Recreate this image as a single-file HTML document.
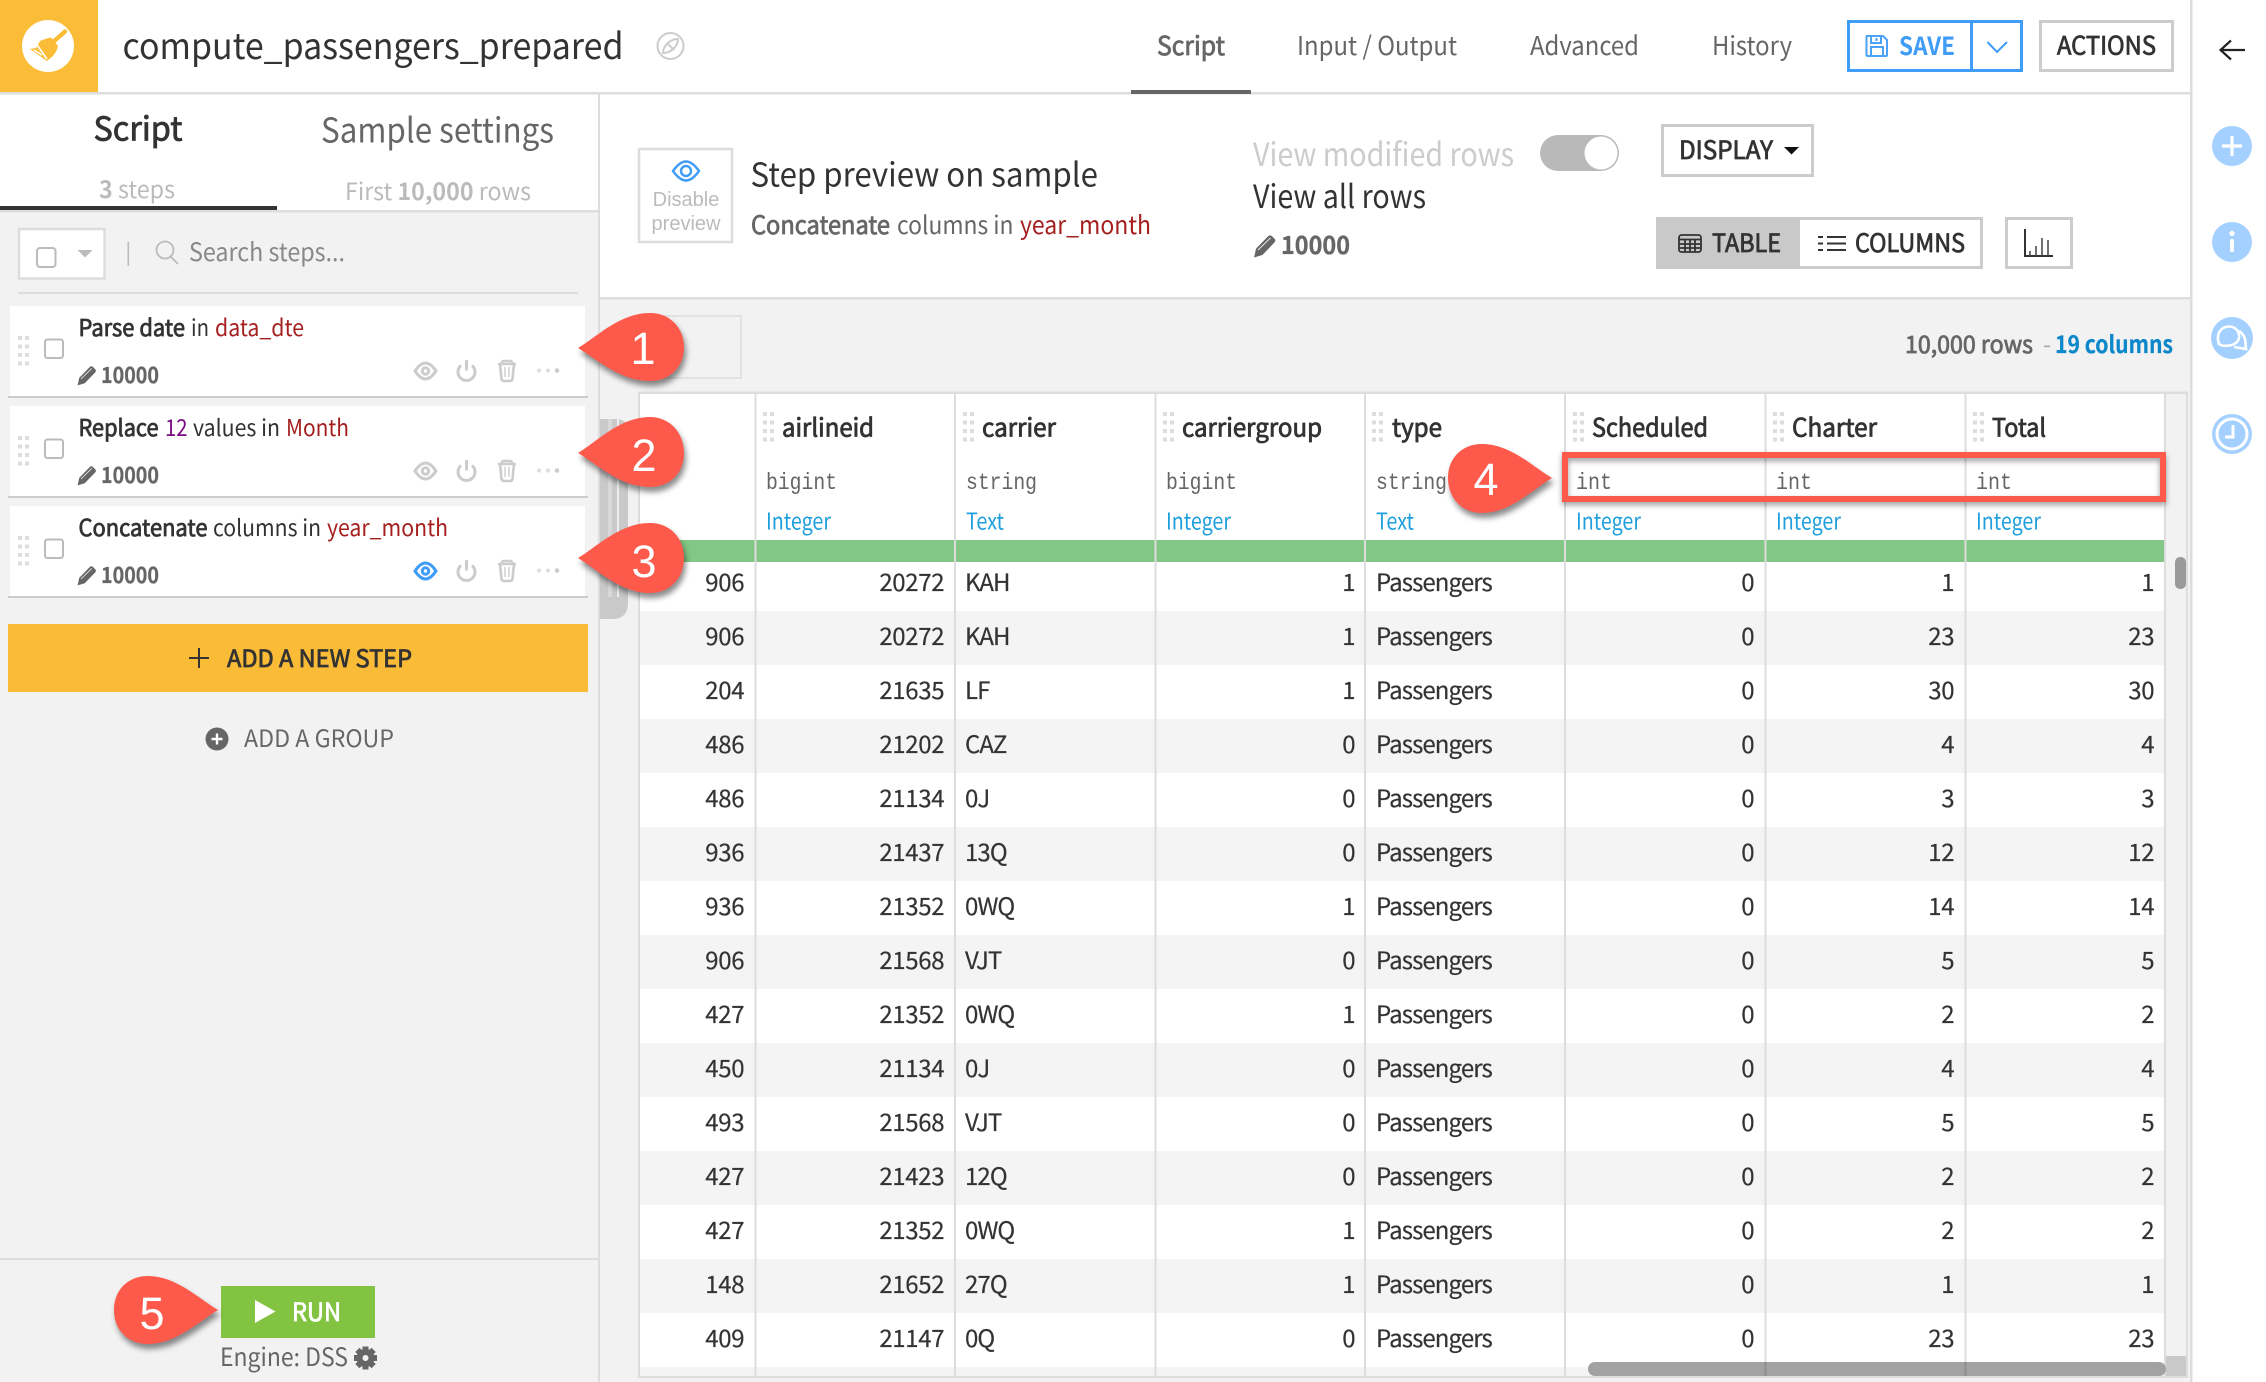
<!DOCTYPE html>
<html lang="en"><head><meta charset="utf-8"><title>compute_passengers_prepared</title>
<style>
html,body{margin:0;padding:0;background:#fff;width:2266px;height:1382px;overflow:hidden}
svg{display:block}
text{font-family:"Noto Sans CJK JP","Liberation Sans",sans-serif;fill:#333;white-space:pre}
.b{font-weight:700}
.m{stroke:#333;stroke-width:.8px}
.g{fill:#666;stroke:#666}
.lib{font-family:"Liberation Sans",sans-serif}
.mono{font-family:"Liberation Mono",monospace;font-size:23px;fill:#666}
.c text{font-size:24px;letter-spacing:-.9px;stroke:#333;stroke-width:.2px}
.c text.e{text-anchor:end;letter-spacing:-.35px;transform:translateX(1.2px)}
.blu{font-size:23px;fill:#1f9fdd}
.n{font-size:25px;stroke:#333;stroke-width:.8px}
.st{font-size:23px}
.red{fill:#a51f1f}
.num{font-family:"Liberation Sans",sans-serif;font-size:45px;fill:#fff;text-anchor:middle}
.cnt{font-size:22px;font-weight:700;fill:#666;stroke:#666;stroke-width:.3px}
.call{fill:#fe5a4c;filter:drop-shadow(2px 5px 3px rgba(0,0,0,.45))}
</style></head><body>
<svg xmlns="http://www.w3.org/2000/svg" width="2266" height="1382" viewBox="0 0 2266 1382">
<defs>
<symbol id="pen" viewBox="0 0 18 19" overflow="visible"><path d="M0 19 1.500 12 12 1.200Q13.400 0 14.800 1.200L17 3.400Q18.200 4.800 17 6.200L6.600 17Z" fill="#666" stroke="#666" stroke-width=".6"/><path d="M3 13 13.800 2.400" stroke="#fff" stroke-width=".7" fill="none"/></symbol>
<symbol id="grip" viewBox="0 0 11 30" overflow="visible"><g fill="#ddd"><rect x="0" y="0" width="4" height="4"/><rect x="7" y="0" width="4" height="4"/><rect x="0" y="8.500" width="4" height="4"/><rect x="7" y="8.500" width="4" height="4"/><rect x="0" y="17" width="4" height="4"/><rect x="7" y="17" width="4" height="4"/><rect x="0" y="25.500" width="4" height="4"/><rect x="7" y="25.500" width="4" height="4"/></g></symbol>
<symbol id="acts" viewBox="0 0 146 24" overflow="visible">
<g fill="none" stroke="#ccc" stroke-width="3">
<path d="M59 6.500A8.500 8.500 0 1 0 70 6.500"/><path d="M64.500 1V11.500"/>
<path d="M96 5H114M100 5V3.500Q100 2 102 2H108Q110 2 110 3.500V5M98 5 99.500 20Q100 22 102 22H108Q110 22 110.500 20L112 5" stroke-width="2.600"/><path d="M103 8V18M107 8V18" stroke-width="1.400"/></g>
<circle cx="137" cy="11.500" r="2" fill="#ddd"/><circle cx="146" cy="11.500" r="2" fill="#ddd"/><circle cx="155" cy="11.500" r="2.300" fill="#ccc"/></symbol>
</defs>

<!-- header -->
<rect x="0" y="0" width="98" height="92" fill="#fbbd38"/>
<circle cx="48" cy="46" r="26" fill="#fff"/>
<path d="M65 31.500 52 43" stroke="#fbbd38" stroke-width="4.500" stroke-linecap="round"/>
<path d="M40 41Q47 38 51 37.500L58 46Q57 51 53 56L47 61 30 49 36 48Z" fill="#fbbd38"/>
<path d="M37 45 47 59M42 55 34 50" stroke="#fff" stroke-width="1.600" fill="none"/>
<text x="122.500" y="59" font-size="36" textLength="501" lengthAdjust="spacingAndGlyphs">compute_passengers_prepared</text>
<g fill="none" stroke="#ccc" stroke-width="2"><circle cx="670.500" cy="46" r="13"/><path d="M663 53C663 46 670 39 678 39C678 46 671 53 663 53ZM667 43 674 50"/></g>
<rect x="0" y="92" width="2190" height="2.500" fill="#ddd"/>
<text x="1157" y="55" font-size="26" class="m g" textLength="68" lengthAdjust="spacingAndGlyphs">Script</text>
<rect x="1131" y="90" width="120" height="4" fill="#666"/>
<text x="1297" y="55" style="fill:#666" font-size="26" textLength="160" lengthAdjust="spacingAndGlyphs">Input / Output</text>
<text x="1530" y="55" style="fill:#666" font-size="26" textLength="109" lengthAdjust="spacingAndGlyphs">Advanced</text>
<text x="1712" y="55" style="fill:#666" font-size="26" textLength="80" lengthAdjust="spacingAndGlyphs">History</text>
<rect x="1848.500" y="21.500" width="173" height="49" fill="#fff" stroke="#3f9cf7" stroke-width="3"/>
<rect x="1970" y="21" width="3" height="50" fill="#3f9cf7"/>
<path d="M1867 36H1883L1887 40V55Q1887 56 1886 56H1868Q1866.500 56 1866.500 55V37Q1866.500 36 1867 36ZM1871 36V43H1881V36M1871 56V47H1883V56M1876.500 38V41" fill="none" stroke="#4ba2f7" stroke-width="2"/>
<text x="1899" y="55" font-size="25" class="b" style="fill:#3f9cf7" textLength="56" lengthAdjust="spacingAndGlyphs">SAVE</text>
<path d="M1987.500 42 1997 52 2007 42" fill="none" stroke="#3f9cf7" stroke-width="2"/>
<rect x="2040.500" y="21.500" width="132" height="49" fill="#fff" stroke="#ccc" stroke-width="3"/>
<text x="2057" y="54.500" font-size="25" class="m" textLength="99" lengthAdjust="spacingAndGlyphs">ACTIONS</text>

<!-- right rail -->
<rect x="2190" y="0" width="2.500" height="1382" fill="#ddd"/>
<path d="M2245 50H2221M2231 40.500 2220.500 50 2231 59.500" fill="none" stroke="#222" stroke-width="2.200"/>
<g fill="#a3d0ff"><circle cx="2232" cy="146" r="20"/><circle cx="2232" cy="242" r="20"/><circle cx="2232" cy="338" r="21"/><circle cx="2232" cy="434" r="20"/></g>
<path d="M2232 136V156M2222 146H2242" stroke="#fff" stroke-width="3.200" fill="none"/>
<circle cx="2232" cy="233.500" r="2.600" fill="#fff"/><rect x="2230" y="239" width="4" height="13" rx="1.500" fill="#fff"/>
<path d="M2219 344C2215 332 2223 326.500 2229 326.500C2238 326.500 2242 336 2237 342C2233 346 2226 346 2222 345.500ZM2239 331C2247 336 2245 344 2246 349L2234 347" fill="none" stroke="#fff" stroke-width="2.600"/>
<circle cx="2232" cy="434" r="15" fill="none" stroke="#fff" stroke-width="3"/><path d="M2233 425V437H2225" fill="none" stroke="#fff" stroke-width="3"/>

<!-- left panel -->
<rect x="0" y="212" width="598" height="1170" fill="#f2f2f2"/>
<rect x="0" y="210" width="598" height="2.500" fill="#ddd"/>
<rect x="0" y="206" width="277" height="4" fill="#333"/>
<text x="93.500" y="140.500" font-size="33" class="m" textLength="89" lengthAdjust="spacingAndGlyphs">Script</text>
<text x="321" y="142.500" font-size="34" style="fill:#666" textLength="233" lengthAdjust="spacingAndGlyphs">Sample settings</text>
<text x="99" y="198" font-size="24" style="fill:#bbb" textLength="76" lengthAdjust="spacingAndGlyphs"><tspan class="b">3</tspan> steps</text>
<text x="345" y="200" font-size="24" style="fill:#bbb" textLength="186" lengthAdjust="spacingAndGlyphs">First <tspan class="b">10,000</tspan> rows</text>
<rect x="19" y="229" width="85.500" height="49.500" fill="#fff" stroke="#ddd" stroke-width="2.500"/>
<rect x="37" y="248" width="18.500" height="19" rx="3" fill="#fff" stroke="#bbb" stroke-width="2"/>
<path d="M77.500 250H92.500L85 257.500Z" fill="#bbb"/>
<rect x="127.500" y="242" width="1.600" height="24" fill="#bbb"/>
<g fill="none" stroke="#bbb" stroke-width="1.800"><circle cx="165" cy="250" r="8.500"/><path d="M171 257 178 264"/></g>
<text x="189" y="261" font-size="25" style="fill:#888" textLength="156" lengthAdjust="spacingAndGlyphs">Search steps...</text>
<rect x="18" y="292" width="560" height="2" fill="#ddd"/>

<!-- steps -->
<g id="s1">
<rect x="10" y="306" width="575" height="90" fill="#fff"/><rect x="8" y="396" width="580" height="2" fill="#ccc"/>
<use href="#grip" x="18" y="336" width="11" height="30"/>
<rect x="45" y="339.500" width="18" height="18.500" rx="2.500" fill="#fff" stroke="#bbb" stroke-width="2"/>
<text x="78.500" y="336" class="st m" textLength="106.500" lengthAdjust="spacingAndGlyphs">Parse date</text>
<text x="191" y="336" class="st" textLength="18" lengthAdjust="spacingAndGlyphs">in</text>
<text x="215" y="336" class="st red" textLength="89" lengthAdjust="spacingAndGlyphs">data_dte</text>
<use href="#pen" x="78" y="366" width="18" height="19"/>
<text x="101" y="383" class="cnt" textLength="58" lengthAdjust="spacingAndGlyphs">10000</text>
<g fill="none" stroke="#ccc" stroke-width="3"><path d="M415 371C419 365 422 363 425.500 363C429 363 432 365 436 371C432 377 429 379 425.500 379C422 379 419 377 415 371Z"/><circle cx="425.500" cy="371" r="3.200"/></g>
<use href="#acts" x="402" y="359" width="146" height="24"/>
</g>
<g id="s2">
<rect x="10" y="406" width="575" height="90" fill="#fff"/><rect x="8" y="496" width="580" height="2" fill="#ccc"/>
<use href="#grip" x="18" y="436" width="11" height="30"/>
<rect x="45" y="439.500" width="18" height="18.500" rx="2.500" fill="#fff" stroke="#bbb" stroke-width="2"/>
<text x="78.500" y="436" class="st m" textLength="80" lengthAdjust="spacingAndGlyphs">Replace</text>
<text x="165" y="436" class="st" style="fill:#7a0a82" textLength="22.500" lengthAdjust="spacingAndGlyphs">12</text>
<text x="193" y="436" class="st" textLength="87" lengthAdjust="spacingAndGlyphs">values in</text>
<text x="286" y="436" class="st red" textLength="63" lengthAdjust="spacingAndGlyphs">Month</text>
<use href="#pen" x="78" y="466" width="18" height="19"/>
<text x="101" y="483" class="cnt" textLength="58" lengthAdjust="spacingAndGlyphs">10000</text>
<g fill="none" stroke="#ccc" stroke-width="3"><path d="M415 471C419 465 422 463 425.500 463C429 463 432 465 436 471C432 477 429 479 425.500 479C422 479 419 477 415 471Z"/><circle cx="425.500" cy="471" r="3.200"/></g>
<use href="#acts" x="402" y="459" width="146" height="24"/>
</g>
<g id="s3">
<rect x="10" y="506" width="575" height="90" fill="#fff"/><rect x="8" y="596" width="580" height="2" fill="#ccc"/>
<use href="#grip" x="18" y="536" width="11" height="30"/>
<rect x="45" y="539.500" width="18" height="18.500" rx="2.500" fill="#fff" stroke="#bbb" stroke-width="2"/>
<text x="78.500" y="536" class="st m" textLength="129" lengthAdjust="spacingAndGlyphs">Concatenate</text>
<text x="213" y="536" class="st" textLength="108" lengthAdjust="spacingAndGlyphs">columns in</text>
<text x="327" y="536" class="st red" textLength="121" lengthAdjust="spacingAndGlyphs">year_month</text>
<use href="#pen" x="78" y="566" width="18" height="19"/>
<text x="101" y="583" class="cnt" textLength="58" lengthAdjust="spacingAndGlyphs">10000</text>
<g fill="none" stroke="#3f9cf7" stroke-width="3"><path d="M415 571C419 565 422 563 425.500 563C429 563 432 565 436 571C432 577 429 579 425.500 579C422 579 419 577 415 571Z"/><circle cx="425.500" cy="571" r="3.200"/></g>
<use href="#acts" x="402" y="559" width="146" height="24"/>
</g>

<rect x="8" y="624" width="580" height="68" fill="#fabb37"/>
<path d="M199 648V668M189 658H209" stroke="#333" stroke-width="2"/>
<text x="227" y="667" font-size="24" class="m" textLength="185" lengthAdjust="spacingAndGlyphs">ADD A NEW STEP</text>
<circle cx="217" cy="739" r="11.500" fill="#666"/><path d="M217 733.500V744.500M211.500 739H222.500" stroke="#fff" stroke-width="2.400"/>
<text x="244" y="747" font-size="24" style="fill:#666" textLength="150" lengthAdjust="spacingAndGlyphs">ADD A GROUP</text>

<rect x="0" y="1258" width="598" height="2" fill="#ddd"/>
<rect x="221" y="1286" width="154" height="52" fill="#82c341"/>
<path d="M255 1300 275.500 1311.500 255 1323Z" fill="#fff"/>
<text x="292" y="1321" font-size="25" class="m" style="fill:#fff;stroke:#fff" textLength="49" lengthAdjust="spacingAndGlyphs">RUN</text>
<text x="220" y="1366" font-size="25" style="fill:#666" textLength="128" lengthAdjust="spacingAndGlyphs">Engine: DSS</text>
<g transform="translate(365.500 1358)"><circle r="6" fill="none" stroke="#666" stroke-width="6"/><path d="M-3-11.500H3V-7H-3ZM-3 7H3V11.500H-3ZM-11.500-3V3H-7V-3ZM7-3V3H11.500V-3Z" fill="#666"/><path d="M-3-11.500H3V-7H-3ZM-3 7H3V11.500H-3Z" fill="#666" transform="rotate(45)"/><path d="M-3-11.500H3V-7H-3ZM-3 7H3V11.500H-3Z" fill="#666" transform="rotate(-45)"/></g>

<!-- preview head -->
<rect x="639" y="149" width="93" height="93" fill="#fff" stroke="#ddd" stroke-width="2.500"/>
<g fill="none" stroke="#3f9cf7" stroke-width="2.400"><path d="M673 171C678 164 682 161.500 686 161.500C690 161.500 694 164 699 171C694 178 690 180.500 686 180.500C682 180.500 678 178 673 171Z"/><circle cx="686" cy="171" r="5"/></g>
<text x="686" y="206" font-size="20" class="lib" style="fill:#bbb;text-anchor:middle">Disable</text>
<text x="686" y="230" font-size="20" class="lib" style="fill:#bbb;text-anchor:middle">preview</text>
<text x="750.500" y="186.500" font-size="33" textLength="347.500" lengthAdjust="spacingAndGlyphs">Step preview on sample</text>
<text x="751" y="234" font-size="25" class="m g" textLength="139" lengthAdjust="spacingAndGlyphs">Concatenate</text>
<text x="897" y="234" font-size="25" style="fill:#666" textLength="116.500" lengthAdjust="spacingAndGlyphs">columns in</text>
<text x="1020" y="234" font-size="25" class="red" textLength="131" lengthAdjust="spacingAndGlyphs">year_month</text>
<text x="1253" y="166" font-size="32" style="fill:#ccc" textLength="261" lengthAdjust="spacingAndGlyphs">View modified rows</text>
<text x="1253" y="208" font-size="32" textLength="173" lengthAdjust="spacingAndGlyphs">View all rows</text>
<use href="#pen" x="1254" y="235" width="22" height="22"/>
<text x="1281" y="254" font-size="25" class="b" style="fill:#666;stroke:#666;stroke-width:.3px" textLength="69" lengthAdjust="spacingAndGlyphs">10000</text>
<rect x="1540" y="135" width="79" height="36" rx="18" fill="#b9b9b9"/>
<circle cx="1601" cy="153" r="16.500" fill="#fff"/>
<rect x="1662.500" y="125.500" width="150" height="50" fill="#fff" stroke="#ccc" stroke-width="3"/>
<text x="1679" y="159" font-size="25" class="m" textLength="94" lengthAdjust="spacingAndGlyphs">DISPLAY</text>
<path d="M1784 147H1799L1791.500 154.500Z" fill="#111"/>
<rect x="1657.500" y="218.500" width="324" height="49" fill="#fff" stroke="#ccc" stroke-width="3"/>
<rect x="1656" y="217" width="144" height="52" fill="#c9c9c9"/>
<g fill="none" stroke="#333" stroke-width="1.800"><rect x="1679" y="235" width="22" height="17" rx="2.500"/><path d="M1679 239.500H1701M1679 244H1701M1679 248H1701M1685 239.500V252M1690 239.500V252M1695 239.500V252"/></g>
<text x="1712" y="252" font-size="25" class="m" textLength="69" lengthAdjust="spacingAndGlyphs">TABLE</text>
<path d="M1818 237H1823M1827 237H1846M1818 243.500H1823M1827 243.500H1846M1818 250H1823M1827 250H1846" stroke="#333" stroke-width="2" fill="none"/>
<text x="1855" y="252" font-size="25" class="m" textLength="110" lengthAdjust="spacingAndGlyphs">COLUMNS</text>
<rect x="2006.500" y="218.500" width="65" height="49" fill="#fff" stroke="#ccc" stroke-width="3"/>
<path d="M2025 229V256H2053" fill="none" stroke="#333" stroke-width="2"/>
<path d="M2030 251V256M2036 246V256M2042 238V256M2048 240V256" stroke="#444" stroke-width="1.500"/>

<!-- gray area -->
<rect x="600" y="297" width="1590" height="1085" fill="#f2f2f2"/>
<rect x="600" y="297" width="1590" height="2.500" fill="#ddd"/>
<rect x="598" y="94" width="2" height="1288" fill="#ddd"/>
<rect x="639" y="316" width="102" height="62" fill="none" stroke="#e2e2e2" stroke-width="2"/>
<text x="1905" y="353" font-size="24" class="m g" textLength="128" lengthAdjust="spacingAndGlyphs">10,000 rows</text>
<text x="2043" y="353" font-size="24" style="fill:#aaa">-</text>
<text x="2055" y="353" font-size="24" class="b" style="fill:#0c87c9;stroke:#0c87c9;stroke-width:.2px" textLength="118" lengthAdjust="spacingAndGlyphs">19 columns</text>

<!-- scroll stripes -->
<path d="M600 419H616Q628 419 628 431V603Q628 619 612 619H600Z" fill="#c9c9c9"/>
<rect x="608" y="419" width="4" height="178" fill="#d8d8d8"/>
<rect x="617" y="419" width="2" height="178" fill="#eee"/>

<!-- table -->
<rect x="640" y="394" width="1546" height="982" fill="#fff"/>
<rect x="638" y="391.500" width="1550" height="2.500" fill="#ddd"/>
<rect x="638" y="392" width="2" height="986" fill="#ddd"/>
<rect x="638" y="1376" width="1550" height="2" fill="#ddd"/>
<rect x="2186" y="392" width="2" height="986" fill="#ddd"/>
<g fill="#f4f4f4"><rect x="640" y="611" width="1524" height="54"/><rect x="640" y="719" width="1524" height="54"/><rect x="640" y="827" width="1524" height="54"/><rect x="640" y="935" width="1524" height="54"/><rect x="640" y="1043" width="1524" height="54"/><rect x="640" y="1151" width="1524" height="54"/><rect x="640" y="1259" width="1524" height="54"/><rect x="640" y="1367" width="1524" height="9"/></g>
<rect x="640" y="540" width="1524" height="22" fill="#82c785"/>
<rect x="2164" y="394" width="22" height="982" fill="#f2f2f2"/>
<g fill="#ddd"><rect x="754.500" y="394" width="2" height="982"/><rect x="954" y="394" width="2" height="982"/><rect x="1154.500" y="394" width="2" height="982"/><rect x="1364" y="394" width="2" height="982"/><rect x="1564" y="394" width="2" height="982"/><rect x="1764.500" y="394" width="2" height="982"/><rect x="1964.500" y="394" width="2" height="982"/><rect x="2164" y="394" width="2" height="982"/></g>

<use href="#grip" x="763" y="412" width="11" height="30"/><use href="#grip" x="963" y="412" width="11" height="30"/><use href="#grip" x="1163" y="412" width="11" height="30"/><use href="#grip" x="1372" y="412" width="11" height="30"/><use href="#grip" x="1573" y="412" width="11" height="30"/><use href="#grip" x="1773" y="412" width="11" height="30"/><use href="#grip" x="1973" y="412" width="11" height="30"/>
<text x="782" y="436.500" class="n" textLength="92" lengthAdjust="spacingAndGlyphs">airlineid</text>
<text x="982" y="436.500" class="n" textLength="74" lengthAdjust="spacingAndGlyphs">carrier</text>
<text x="1182" y="436.500" class="n" textLength="140" lengthAdjust="spacingAndGlyphs">carriergroup</text>
<text x="1392" y="436.500" class="n" textLength="50" lengthAdjust="spacingAndGlyphs">type</text>
<text x="1592" y="436.500" class="n" textLength="116" lengthAdjust="spacingAndGlyphs">Scheduled</text>
<text x="1792" y="436.500" class="n" textLength="85" lengthAdjust="spacingAndGlyphs">Charter</text>
<text x="1992" y="436.500" class="n" textLength="54" lengthAdjust="spacingAndGlyphs">Total</text>
<text x="766" y="489" class="mono" textLength="71" lengthAdjust="spacingAndGlyphs">bigint</text><text x="966" y="489" class="mono" textLength="71" lengthAdjust="spacingAndGlyphs">string</text><text x="1166" y="489" class="mono" textLength="71" lengthAdjust="spacingAndGlyphs">bigint</text><text x="1376" y="489" class="mono" textLength="71" lengthAdjust="spacingAndGlyphs">string</text><text x="1576" y="489" class="mono" textLength="36" lengthAdjust="spacingAndGlyphs">int</text><text x="1776" y="489" class="mono" textLength="36" lengthAdjust="spacingAndGlyphs">int</text><text x="1976" y="489" class="mono" textLength="36" lengthAdjust="spacingAndGlyphs">int</text>
<text x="766" y="529.500" class="blu" textLength="65" lengthAdjust="spacingAndGlyphs">Integer</text><text x="966" y="529.500" class="blu" textLength="38" lengthAdjust="spacingAndGlyphs">Text</text><text x="1166" y="529.500" class="blu" textLength="65" lengthAdjust="spacingAndGlyphs">Integer</text><text x="1376" y="529.500" class="blu" textLength="38" lengthAdjust="spacingAndGlyphs">Text</text><text x="1576" y="529.500" class="blu" textLength="65" lengthAdjust="spacingAndGlyphs">Integer</text><text x="1776" y="529.500" class="blu" textLength="65" lengthAdjust="spacingAndGlyphs">Integer</text><text x="1976" y="529.500" class="blu" textLength="65" lengthAdjust="spacingAndGlyphs">Integer</text>

<g class="c">
<g transform="translate(0 591)"><text x="743" class="e">906</text><text x="943" class="e">20272</text><text x="965">KAH</text><text x="1354" class="e">1</text><text x="1376">Passengers</text><text x="1753" class="e">0</text><text x="1953" class="e">1</text><text x="2153" class="e">1</text></g>
<g transform="translate(0 645)"><text x="743" class="e">906</text><text x="943" class="e">20272</text><text x="965">KAH</text><text x="1354" class="e">1</text><text x="1376">Passengers</text><text x="1753" class="e">0</text><text x="1953" class="e">23</text><text x="2153" class="e">23</text></g>
<g transform="translate(0 699)"><text x="743" class="e">204</text><text x="943" class="e">21635</text><text x="965">LF</text><text x="1354" class="e">1</text><text x="1376">Passengers</text><text x="1753" class="e">0</text><text x="1953" class="e">30</text><text x="2153" class="e">30</text></g>
<g transform="translate(0 753)"><text x="743" class="e">486</text><text x="943" class="e">21202</text><text x="965">CAZ</text><text x="1354" class="e">0</text><text x="1376">Passengers</text><text x="1753" class="e">0</text><text x="1953" class="e">4</text><text x="2153" class="e">4</text></g>
<g transform="translate(0 807)"><text x="743" class="e">486</text><text x="943" class="e">21134</text><text x="965">0J</text><text x="1354" class="e">0</text><text x="1376">Passengers</text><text x="1753" class="e">0</text><text x="1953" class="e">3</text><text x="2153" class="e">3</text></g>
<g transform="translate(0 861)"><text x="743" class="e">936</text><text x="943" class="e">21437</text><text x="965">13Q</text><text x="1354" class="e">0</text><text x="1376">Passengers</text><text x="1753" class="e">0</text><text x="1953" class="e">12</text><text x="2153" class="e">12</text></g>
<g transform="translate(0 915)"><text x="743" class="e">936</text><text x="943" class="e">21352</text><text x="965">0WQ</text><text x="1354" class="e">1</text><text x="1376">Passengers</text><text x="1753" class="e">0</text><text x="1953" class="e">14</text><text x="2153" class="e">14</text></g>
<g transform="translate(0 969)"><text x="743" class="e">906</text><text x="943" class="e">21568</text><text x="965">VJT</text><text x="1354" class="e">0</text><text x="1376">Passengers</text><text x="1753" class="e">0</text><text x="1953" class="e">5</text><text x="2153" class="e">5</text></g>
<g transform="translate(0 1023)"><text x="743" class="e">427</text><text x="943" class="e">21352</text><text x="965">0WQ</text><text x="1354" class="e">1</text><text x="1376">Passengers</text><text x="1753" class="e">0</text><text x="1953" class="e">2</text><text x="2153" class="e">2</text></g>
<g transform="translate(0 1077)"><text x="743" class="e">450</text><text x="943" class="e">21134</text><text x="965">0J</text><text x="1354" class="e">0</text><text x="1376">Passengers</text><text x="1753" class="e">0</text><text x="1953" class="e">4</text><text x="2153" class="e">4</text></g>
<g transform="translate(0 1131)"><text x="743" class="e">493</text><text x="943" class="e">21568</text><text x="965">VJT</text><text x="1354" class="e">0</text><text x="1376">Passengers</text><text x="1753" class="e">0</text><text x="1953" class="e">5</text><text x="2153" class="e">5</text></g>
<g transform="translate(0 1185)"><text x="743" class="e">427</text><text x="943" class="e">21423</text><text x="965">12Q</text><text x="1354" class="e">0</text><text x="1376">Passengers</text><text x="1753" class="e">0</text><text x="1953" class="e">2</text><text x="2153" class="e">2</text></g>
<g transform="translate(0 1239)"><text x="743" class="e">427</text><text x="943" class="e">21352</text><text x="965">0WQ</text><text x="1354" class="e">1</text><text x="1376">Passengers</text><text x="1753" class="e">0</text><text x="1953" class="e">2</text><text x="2153" class="e">2</text></g>
<g transform="translate(0 1293)"><text x="743" class="e">148</text><text x="943" class="e">21652</text><text x="965">27Q</text><text x="1354" class="e">1</text><text x="1376">Passengers</text><text x="1753" class="e">0</text><text x="1953" class="e">1</text><text x="2153" class="e">1</text></g>
<g transform="translate(0 1347)"><text x="743" class="e">409</text><text x="943" class="e">21147</text><text x="965">0Q</text><text x="1354" class="e">0</text><text x="1376">Passengers</text><text x="1753" class="e">0</text><text x="1953" class="e">23</text><text x="2153" class="e">23</text></g>
</g>

<!-- scrollbars -->
<rect x="2175" y="557" width="11" height="32" rx="5" fill="#9a9a9a"/>
<rect x="2166" y="1356" width="20" height="20" fill="#c9c9c9"/>
<rect x="1588" y="1362" width="578" height="14" rx="7" fill="#a2a2a2"/>
<rect x="1764.500" y="1362" width="2" height="14" fill="#8e8e8e"/><rect x="1964.500" y="1362" width="2" height="14" fill="#8e8e8e"/>

<!-- red highlight -->
<rect x="1565" y="455" width="598" height="44" fill="none" stroke="#fe5a4c" stroke-width="6" style="filter:drop-shadow(0 3px 3px rgba(0,0,0,.4))"/>

<!-- callouts -->
<path class="call" d="M578 348C598 336 620 313 650 313C670 313 684 328 684 347C684 367 670 381 650 381C620 381 598 360 578 348Z"/>
<text x="643" y="364" class="num">1</text>
<path class="call" d="M578 453C598 441 620 417 650 417C670 417 684 433 684 453C684 473 670 487 650 487C620 487 598 465 578 453Z"/>
<text x="644" y="471" class="num">2</text>
<path class="call" d="M578 558C598 546 620 523 650 523C670 523 684 538 684 558C684 578 670 593 650 593C620 593 598 570 578 558Z"/>
<text x="644" y="577" class="num">3</text>
<path class="call" d="M1552 478C1532 466 1510 444 1482 444C1462 444 1448 458 1448 478C1448 498 1462 513 1482 513C1510 513 1532 490 1552 478Z"/>
<text x="1486" y="495" class="num">4</text>
<path class="call" d="M218 1310C198 1298 176 1276 148 1276C128 1276 114 1290 114 1310C114 1330 128 1344 148 1344C176 1344 198 1322 218 1310Z"/>
<text x="152" y="1329" class="num">5</text>
</svg>
</body></html>
